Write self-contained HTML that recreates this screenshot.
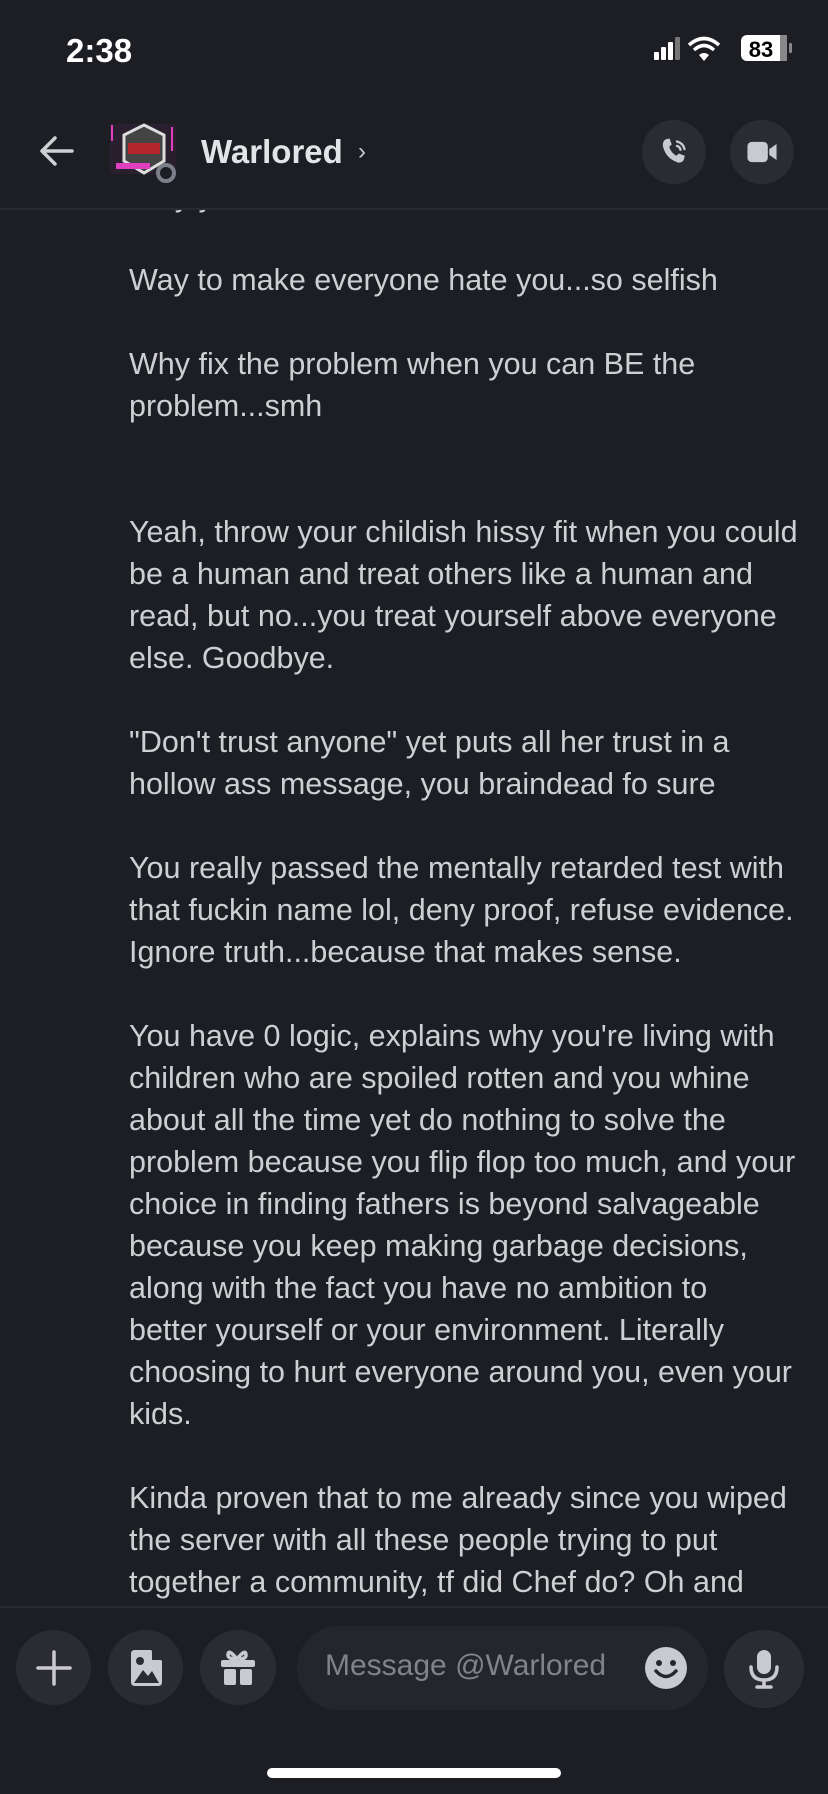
<!DOCTYPE html>
<html><head><meta charset="utf-8"><style>
html,body{margin:0;padding:0;background:#1d1e23;}
body{width:828px;height:1792px;position:relative;overflow:hidden;font-family:"Liberation Sans",sans-serif;}
.l{position:absolute;left:129px;color:#cdcfd3;font-size:30.5px;white-space:nowrap;line-height:42px;}
.hdr{position:absolute;left:0;top:0;width:828px;height:208px;background:#1d1e23;border-bottom:2px solid #2a2b30;z-index:2;}
.ftr{position:absolute;left:0;top:1606px;width:828px;height:186px;background:#1d1e23;border-top:2px solid #2a2b30;z-index:2;}
.cb{position:absolute;border-radius:50%;background:#2b2c32;}
</style></head><body>
<div class="l" style="top:175px">Why you</div>
<div class="l" style="top:259px">Way to make everyone hate you...so selfish</div>
<div class="l" style="top:343px">Why fix the problem when you can BE the</div>
<div class="l" style="top:385px">problem...smh</div>
<div class="l" style="top:511px">Yeah, throw your childish hissy fit when you could</div>
<div class="l" style="top:553px">be a human and treat others like a human and</div>
<div class="l" style="top:595px">read, but no...you treat yourself above everyone</div>
<div class="l" style="top:637px">else. Goodbye.</div>
<div class="l" style="top:721px">"Don't trust anyone" yet puts all her trust in a</div>
<div class="l" style="top:763px">hollow ass message, you braindead fo sure</div>
<div class="l" style="top:847px">You really passed the mentally retarded test with</div>
<div class="l" style="top:889px">that fuckin name lol, deny proof, refuse evidence.</div>
<div class="l" style="top:931px">Ignore truth...because that makes sense.</div>
<div class="l" style="top:1015px">You have 0 logic, explains why you're living with</div>
<div class="l" style="top:1057px">children who are spoiled rotten and you whine</div>
<div class="l" style="top:1099px">about all the time yet do nothing to solve the</div>
<div class="l" style="top:1141px">problem because you flip flop too much, and your</div>
<div class="l" style="top:1183px">choice in finding fathers is beyond salvageable</div>
<div class="l" style="top:1225px">because you keep making garbage decisions,</div>
<div class="l" style="top:1267px">along with the fact you have no ambition to</div>
<div class="l" style="top:1309px">better yourself or your environment. Literally</div>
<div class="l" style="top:1351px">choosing to hurt everyone around you, even your</div>
<div class="l" style="top:1393px">kids.</div>
<div class="l" style="top:1477px">Kinda proven that to me already since you wiped</div>
<div class="l" style="top:1519px">the server with all these people trying to put</div>
<div class="l" style="top:1561px">together a community, tf did Chef do? Oh and</div>

<div class="hdr">
  <div style="position:absolute;left:66px;top:32px;color:#fff;font-weight:bold;font-size:33px;">2:38</div>
  <svg style="position:absolute;left:650px;top:34px" width="150" height="32" viewBox="0 0 150 32">
    <rect x="4" y="18" width="5" height="8" rx="1" fill="#fff"/>
    <rect x="11" y="13" width="5" height="13" rx="1" fill="#fff"/>
    <rect x="18" y="8" width="5" height="18" rx="1" fill="#fff"/>
    <rect x="25" y="3" width="5" height="23" rx="1" fill="#777"/>
    <path d="M39 11 Q54 -2 69 11" stroke="#fff" stroke-width="3.5" fill="none"/>
    <path d="M44 16 Q54 7 64 16" stroke="#fff" stroke-width="3.5" fill="none"/>
    <path d="M49 21 L54 27 L59 21 Q54 17 49 21Z" fill="#fff"/>
    <rect x="91" y="1" width="46" height="26" rx="6" fill="#fff"/>
    <rect x="130" y="1" width="7" height="26" fill="#888"/>
    <rect x="139" y="9" width="3" height="10" rx="1" fill="#888"/>
    <text x="111" y="23" text-anchor="middle" font-family="Liberation Sans" font-weight="bold" font-size="22" fill="#000">83</text>
  </svg>
  <svg style="position:absolute;left:38px;top:133px" width="38" height="36" viewBox="0 0 38 36">
    <path d="M34 18 H5 M17 5 L4 18 L17 31" stroke="#cfd0d4" stroke-width="3.5" fill="none" stroke-linecap="round" stroke-linejoin="round"/>
  </svg>
  <svg style="position:absolute;left:108px;top:121px" width="72" height="62" viewBox="0 0 72 62">
    <rect x="2" y="3" width="66" height="50" fill="#2a1f2e"/>
    <path d="M36 4 L56 14 L56 40 L36 52 L16 40 L16 14Z" fill="#444" stroke="#ddd" stroke-width="3"/>
    <rect x="20" y="22" width="32" height="11" fill="#b3262c"/>
    <rect x="8" y="42" width="34" height="6" fill="#e040c0"/>
    <path d="M4 4 V20 M64 6 V30" stroke="#e040c0" stroke-width="2"/>
    <circle cx="58" cy="52" r="8" fill="#1d1e23" stroke="#7b7f8a" stroke-width="4"/>
  </svg>
  <div style="position:absolute;left:201px;top:133px;color:#e3e4e8;font-weight:bold;font-size:33px;">Warlored</div>
  <div style="position:absolute;left:358px;top:138px;color:#c9cad0;font-size:24px;">›</div>
  <div class="cb" style="left:642px;top:120px;width:64px;height:64px;"></div>
  <svg style="position:absolute;left:656px;top:134px" width="36" height="36" viewBox="0 0 24 24">
    <path d="M6.6 3.5 L9 3 L10.5 7 L8.8 8.6 Q10 12.5 13.5 14.5 L15.2 13 L19.2 14.5 L18.6 17 Q17.5 19.5 14.5 19 Q6 16 4.5 7.5 Q4.5 4.5 6.6 3.5Z" fill="#c9cad0"/>
    <path d="M14 5 Q18 6 19 10 M14 8 Q16 8.5 16.3 10.5" stroke="#c9cad0" stroke-width="1.6" fill="none" stroke-linecap="round"/>
  </svg>
  <div class="cb" style="left:730px;top:120px;width:64px;height:64px;"></div>
  <svg style="position:absolute;left:744px;top:136px" width="36" height="32" viewBox="0 0 24 22">
    <rect x="2" y="4" width="14" height="14" rx="3" fill="#c9cad0"/>
    <path d="M17 9 L22 5.5 V16.5 L17 13Z" fill="#c9cad0"/>
  </svg>
</div>

<div class="ftr">
  <div class="cb" style="left:16px;top:22px;width:75px;height:75px;"></div>
  <svg style="position:absolute;left:34px;top:40px" width="40" height="40" viewBox="0 0 40 40"><path d="M20 4 V36 M4 20 H36" stroke="#c9cad0" stroke-width="3.5" stroke-linecap="round"/></svg>
  <div class="cb" style="left:108px;top:22px;width:75px;height:75px;"></div>
  <svg style="position:absolute;left:126px;top:40px" width="40" height="40" viewBox="0 0 40 40">
    <path d="M5 6 Q5 2 9 2 H25 L36 13 V34 Q36 38 32 38 H9 Q5 38 5 34Z" fill="#c9cad0"/>
    <path d="M8 35 L17 22 L22 28 L26 23 L33 35Z" fill="#2b2c32"/>
    <circle cx="14" cy="13" r="4" fill="#2b2c32"/>
    <path d="M26 2 V12 H36" fill="#2b2c32"/>
  </svg>
  <div class="cb" style="left:200px;top:22px;width:76px;height:75px;"></div>
  <svg style="position:absolute;left:218px;top:40px" width="40" height="40" viewBox="0 0 40 40">
    <rect x="3" y="12" width="34" height="7" rx="2" fill="#c9cad0"/>
    <rect x="6" y="21" width="12" height="16" rx="2" fill="#c9cad0"/>
    <rect x="22" y="21" width="12" height="16" rx="2" fill="#c9cad0"/>
    <path d="M19 11 Q10 0 10 7 Q10 11 19 11 Q28 0 28 7 Q28 11 21 11" stroke="#c9cad0" stroke-width="3.5" fill="none"/>
  </svg>
  <div style="position:absolute;left:297px;top:18px;width:411px;height:84px;border-radius:42px;background:#25262c;"></div>
  <div style="position:absolute;left:325px;top:41px;color:#80838c;font-size:30px;">Message @Warlored</div>
  <svg style="position:absolute;left:644px;top:38px" width="44" height="44" viewBox="0 0 44 44">
    <ellipse cx="22" cy="22" rx="21" ry="21" fill="#c9cad0"/>
    <circle cx="15" cy="17" r="3" fill="#25262c"/><circle cx="29" cy="17" r="3" fill="#25262c"/>
    <path d="M12 25 Q22 36 32 25" stroke="#25262c" stroke-width="3.5" fill="none" stroke-linecap="round"/>
  </svg>
  <div class="cb" style="left:724px;top:22px;width:80px;height:78px;"></div>
  <svg style="position:absolute;left:744px;top:40px" width="40" height="42" viewBox="0 0 40 42">
    <rect x="13" y="2" width="14" height="24" rx="7" fill="#c9cad0"/>
    <path d="M7 19 Q7 32 20 32 Q33 32 33 19" stroke="#c9cad0" stroke-width="3.5" fill="none" stroke-linecap="round"/>
    <path d="M20 32 V38 M13 39 H27" stroke="#c9cad0" stroke-width="3.5" stroke-linecap="round"/>
  </svg>
  <div style="position:absolute;left:267px;top:160px;width:294px;height:10px;border-radius:5px;background:#fff;"></div>
</div>
</body></html>
